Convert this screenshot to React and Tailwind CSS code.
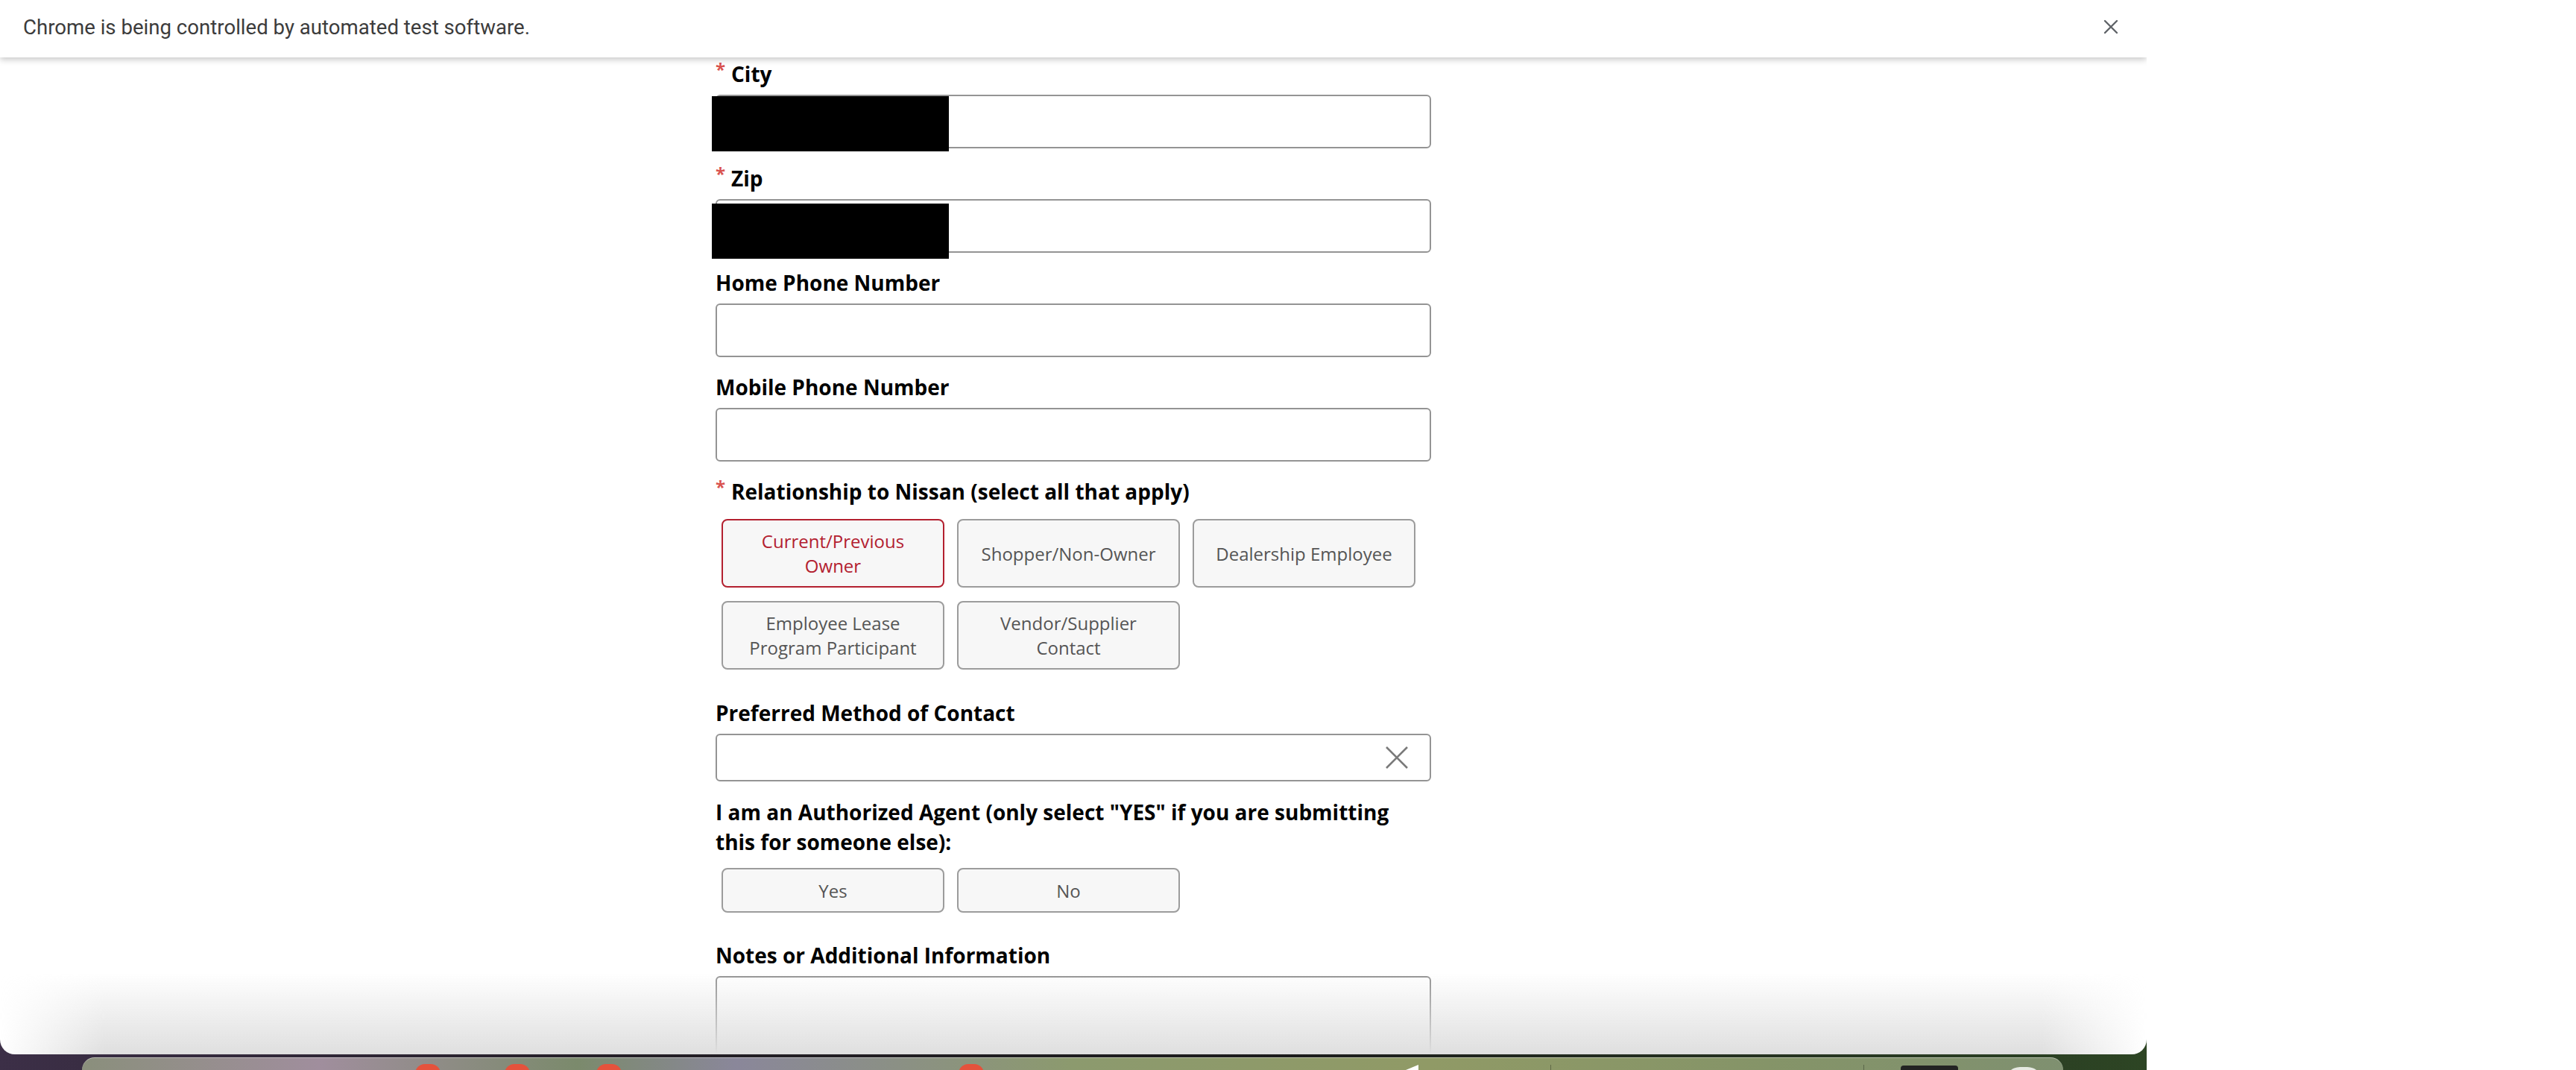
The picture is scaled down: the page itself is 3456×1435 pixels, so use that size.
import React from "react";

const Label = ({ required, children, className = "" }) => (
  <div className={"text-[28px] font-bold leading-[40px] text-black " + className}>
    {required && (
      <span className="relative -top-[8px] inline-block w-[21px] text-[24px] font-bold leading-[18px] text-[#d9534f]">*</span>
    )}
    {children}
  </div>
);

const TextInput = ({ redacted, redactTop = 2 }) => (
  <div className="relative mt-2">
    <div className="h-[72px] w-full rounded-[6px] border-2 border-[#949494] bg-white" />
    {redacted && (
      <div
        className={
          "absolute -left-[5px] h-[74px] w-[318px] bg-black " + (redactTop === 2 ? "top-[2px]" : "top-[6px]")
        }
      />
    )}
  </div>
);

const Choice = ({ children, selected, tall = true }) => (
  <div
    className={
      "flex w-[299px] items-center justify-center rounded-[8px] border-2 bg-[#f7f7f7] px-[22px] text-center text-[24px] leading-[33px] " +
      (tall ? "h-[92px] " : "h-[60px] ") +
      (selected ? "border-[#b3202f] text-[#b3202f]" : "border-[#9c9c9c] text-[#555555]")
    }
  >
    {children}
  </div>
);

const InfoBar = () => (
  <div className="relative z-10 flex h-[77px] shrink-0 items-center justify-between bg-white pl-[31px] pr-[38px] font-['Roboto',sans-serif] shadow-[0_3px_8px_rgba(0,0,0,0.22)]">
    <span className="-mt-[4px] text-[27.6px] text-[#3c3c3c]">Chrome is being controlled by automated test software.</span>
    <svg width="20" height="20" viewBox="0 0 20 20" className="-mt-[6px] text-[#5f6368]">
      <path d="M2 2 L18 18 M18 2 L2 18" stroke="currentColor" strokeWidth="2.4" strokeLinecap="round" />
    </svg>
  </div>
);

const Form = () => (
  <div className="mx-auto flex w-[960px] flex-col pt-[2px] font-['Open_Sans',sans-serif]">
    <Label required>City</Label>
    <TextInput redacted />

    <Label required className="mt-[20px]">Zip</Label>
    <TextInput redacted redactTop={6} />

    <Label className="mt-[20px]">Home Phone Number</Label>
    <TextInput />

    <Label className="mt-[20px]">Mobile Phone Number</Label>
    <TextInput />

    <Label required className="mt-[20px]">Relationship to Nissan (select all that apply)</Label>
    <div className="ml-2 mt-[17px] flex flex-col gap-[18px]">
      <div className="flex gap-[17px]">
        <Choice selected>Current/Previous Owner</Choice>
        <Choice>Shopper/Non-Owner</Choice>
        <Choice>Dealership Employee</Choice>
      </div>
      <div className="flex gap-[17px]">
        <Choice>Employee Lease Program Participant</Choice>
        <Choice>Vendor/Supplier Contact</Choice>
      </div>
    </div>

    <Label className="mt-[38px]">Preferred Method of Contact</Label>
    <div className="mt-2 flex h-[64px] items-center justify-end rounded-[6px] border-2 border-[#949494] bg-white pr-[28px]">
      <svg width="32" height="30" viewBox="0 0 32 30" className="text-[#7a7a7a]">
        <path d="M2 1 L30 29 M30 1 L2 29" stroke="currentColor" strokeWidth="2.6" />
      </svg>
    </div>

    <Label className="mt-[21px] leading-[38px]">
      I am an Authorized Agent (only select "YES" if you are submitting
      <br />
      this for someone else):
    </Label>
    <div className="ml-2 mt-[15px] flex gap-[17px]">
      <Choice tall={false}>Yes</Choice>
      <Choice tall={false}>No</Choice>
    </div>

    <Label className="mt-[37px]">Notes or Additional Information</Label>
    <div className="mt-2 h-[220px] rounded-[6px] border-2 border-[#949494] bg-white" />
  </div>
);

const Dock = () => (
  <div className="relative ml-[110px] mr-[112px] mt-[4px] flex-1 rounded-t-[26px] border-t border-white/40 bg-[linear-gradient(to_right,#8a8f7c,#a08e9d_12%,#7b8a6c_25%,#8a879a_33%,#8c9a6e_50%,#909a66_68%,#859468_85%,#7f9070)]">
    <div className="absolute left-[447px] top-[8px] h-[26px] w-[34px] rounded-full bg-[#e5523c]" />
    <div className="absolute left-[567px] top-[8px] h-[26px] w-[34px] rounded-full bg-[#e5523c]" />
    <div className="absolute left-[690px] top-[8px] h-[26px] w-[34px] rounded-full bg-[#e5523c]" />
    <div className="absolute left-[1176px] top-[8px] h-[26px] w-[34px] rounded-full bg-[#e5523c]" />
    <svg className="absolute left-[1759px] top-[9px]" width="34" height="14" viewBox="0 0 34 14">
      <polygon points="34,0 34,14 0,14" fill="#ffffff" />
    </svg>
    <div className="absolute left-[1970px] top-[9px] h-[20px] w-[1px] bg-black/30" />
    <div className="absolute left-[2390px] top-[9px] h-[20px] w-[1px] bg-black/30" />
    <div className="absolute left-[2440px] top-[10px] h-[20px] w-[77px] rounded-t-[4px] bg-[#232323]" />
    <div className="absolute left-[2580px] top-[12px] h-[40px] w-[50px] rounded-full bg-white/80" />
  </div>
);

export default function App() {
  return (
    <div className="flex h-[1435px] w-[3456px] overflow-hidden bg-white">
      <div className="flex w-[2880px] flex-col bg-[linear-gradient(to_right,#3c2f47,#241f26_30%,#1c1c1c_60%,#2d4524)]">
        <div className="relative flex h-[1414px] shrink-0 flex-col overflow-hidden rounded-b-[20px] bg-white">
          <InfoBar />
          <div className="flex-1 overflow-hidden">
            <Form />
          </div>
          <div className="pointer-events-none absolute inset-x-0 bottom-0 h-[110px] bg-[linear-gradient(to_bottom,rgba(223,223,223,0),#dfdfdf)] [mask-image:linear-gradient(to_right,transparent,black_140px,black_calc(100%_-_140px),transparent)]" />
        </div>
        <Dock />
      </div>
    </div>
  );
}
